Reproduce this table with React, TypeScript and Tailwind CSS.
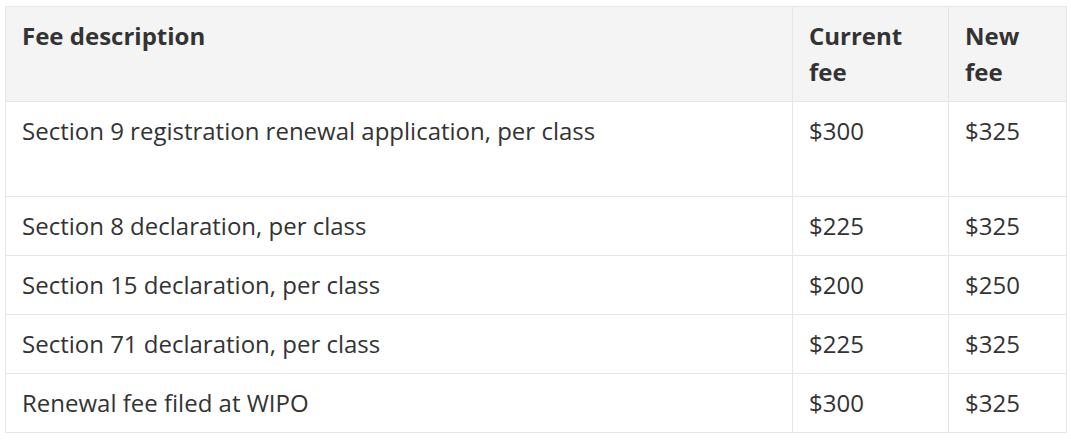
const rows = [
  { desc: 'Section 9 registration renewal application, per class', current: '$300', next: '$325', tall: true },
  { desc: 'Section 8 declaration, per class', current: '$225', next: '$325' },
  { desc: 'Section 15 declaration, per class', current: '$200', next: '$250' },
  { desc: 'Section 71 declaration, per class', current: '$225', next: '$325' },
  { desc: 'Renewal fee filed at WIPO', current: '$300', next: '$325' },
];

export default function App() {
  return (
    <div className="bg-white pl-[5px] pt-[6px] font-['Open_Sans',Arial,sans-serif] text-[24px] leading-[36px] text-[#333]">
      <table className="w-[1061px] table-fixed border-collapse border border-[#e6e6e6]">
        <colgroup>
          <col className="w-[787px]" />
          <col className="w-[156px]" />
          <col className="w-[118px]" />
        </colgroup>
        <thead>
          <tr className="bg-[#f4f4f4]">
            <th className="border border-[#e6e6e6] px-4 py-[11px] text-left align-top font-bold">
              Fee description
            </th>
            <th className="border border-[#e6e6e6] px-4 py-[11px] text-left align-top font-bold">
              Current fee
            </th>
            <th className="border border-[#e6e6e6] px-4 py-[11px] text-left align-top font-bold">
              New fee
            </th>
          </tr>
        </thead>
        <tbody>
          {rows.map((row) => (
            <tr key={row.desc}>
              <td
                className={`border border-[#e6e6e6] px-4 py-[11px] align-top ${row.tall ? 'h-[95px]' : ''}`}
              >
                {row.desc}
              </td>
              <td className="border border-[#e6e6e6] px-4 py-[11px] align-top">{row.current}</td>
              <td className="border border-[#e6e6e6] px-4 py-[11px] align-top">{row.next}</td>
            </tr>
          ))}
        </tbody>
      </table>
    </div>
  );
}
